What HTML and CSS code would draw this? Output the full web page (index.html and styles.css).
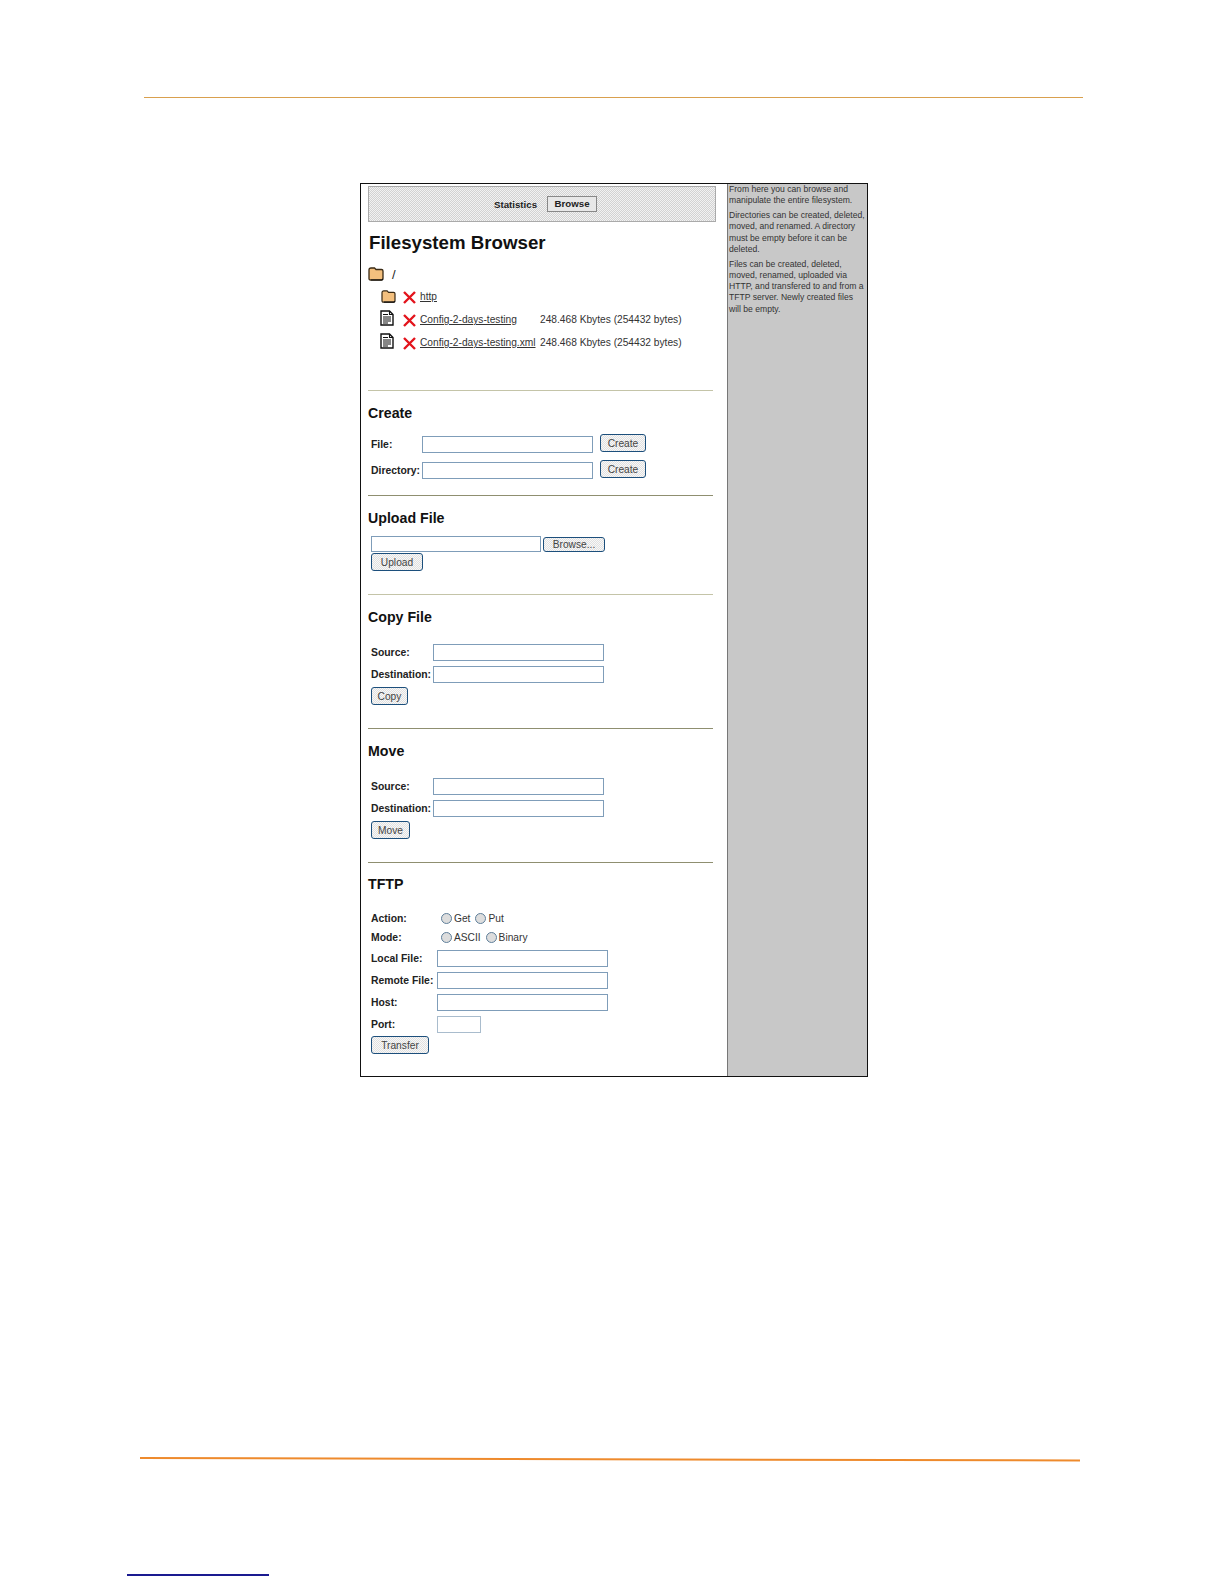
FILE: index.html
```html
<!DOCTYPE html>
<html lang="en">
<head>
    <meta charset="UTF-8">
    <title>Filesystem Browser</title>
    <link rel="stylesheet" href="styles.css">
</head>
<body>
    <svg width="0" height="0" class="defs">
        <symbol id="folder" viewBox="0 0 16 14">
            <path d="M1 3 Q1 1 3 1 H6.5 L8 2.5 H13.5 Q15 2.5 15 4 V11.5 Q15 13 13.5 13 H2.5 Q1 13 1 11.5 Z" fill="#f4c07e" stroke="#3a2a14" stroke-width="1.3"/>
            <path d="M3 13 H14 L15 12" fill="none" stroke="#111" stroke-width="1.2"/>
        </symbol>
        <symbol id="doc" viewBox="0 0 14 16">
            <path d="M1 1 H9.5 L13 4.5 V15 H1 Z" fill="#fff" stroke="#111" stroke-width="1.4"/>
            <path d="M9.5 1 V4.5 H13 M3 4.5 H8 M3 7 H11 M3 9 H11 M3 11 H11 M3 13 H8" fill="none" stroke="#111" stroke-width="1.1"/>
        </symbol>
        <symbol id="cross" viewBox="0 0 13 13">
            <path d="M1 1 L12 12 M12 1 L1 12" fill="none" stroke="#e3141c" stroke-width="2.4"/>
        </symbol>
    </svg>

    <div class="rule-top"></div>

    <div class="frame">
        <div class="main">
            <div class="tabs">
                <span>Statistics</span>
                <span class="tab-on">Browse</span>
            </div>

            <h1>Filesystem Browser</h1>

            <div class="tree-root">
                <svg class="ic-root"><use href="#folder"/></svg>
                <span>/</span>
            </div>
            <div class="tree-row row-dir">
                <svg class="ic-folder"><use href="#folder"/></svg>
                <svg class="ic-cross"><use href="#cross"/></svg>
                <a href="#">http</a>
            </div>
            <div class="tree-row">
                <svg class="ic-doc"><use href="#doc"/></svg>
                <svg class="ic-cross"><use href="#cross"/></svg>
                <a class="fname" href="#">Config-2-days-testing</a>
                <span>248.468 Kbytes (254432 bytes)</span>
            </div>
            <div class="tree-row">
                <svg class="ic-doc"><use href="#doc"/></svg>
                <svg class="ic-cross"><use href="#cross"/></svg>
                <a class="fname" href="#">Config-2-days-testing.xml</a>
                <span>248.468 Kbytes (254432 bytes)</span>
            </div>

            <section class="sec sec-create">
                <h2>Create</h2>
                <div class="create-row">
                    <label>File:</label>
                    <input class="field" type="text">
                    <button class="btn btn-create">Create</button>
                </div>
                <div class="create-row">
                    <label>Directory:</label>
                    <input class="field" type="text">
                    <button class="btn btn-create">Create</button>
                </div>
            </section>

            <section class="sec sec-upload">
                <h2>Upload File</h2>
                <div class="upload-row">
                    <input class="field field-up" type="text">
                    <button class="btn btn-browse">Browse...</button>
                </div>
                <button class="btn btn-upload">Upload</button>
            </section>

            <section class="sec sec-copy">
                <h2>Copy File</h2>
                <div class="pair-row"><label>Source:</label><input class="field" type="text"></div>
                <div class="pair-row"><label>Destination:</label><input class="field" type="text"></div>
                <button class="btn btn-copy">Copy</button>
            </section>

            <section class="sec sec-move">
                <h2>Move</h2>
                <div class="pair-row"><label>Source:</label><input class="field" type="text"></div>
                <div class="pair-row"><label>Destination:</label><input class="field" type="text"></div>
                <button class="btn btn-move">Move</button>
            </section>

            <section class="sec sec-tftp">
                <h2>TFTP</h2>
                <div class="radio-row">
                    <label>Action:</label>
                    <span class="radio"></span><span class="opt">Get</span>
                    <span class="radio"></span><span class="opt">Put</span>
                </div>
                <div class="radio-row">
                    <label>Mode:</label>
                    <span class="radio"></span><span class="opt">ASCII</span>
                    <span class="radio"></span><span class="opt">Binary</span>
                </div>
                <div class="tftp-row"><label>Local File:</label><input class="field" type="text"></div>
                <div class="tftp-row"><label>Remote File:</label><input class="field" type="text"></div>
                <div class="tftp-row"><label>Host:</label><input class="field" type="text"></div>
                <div class="tftp-row"><label>Port:</label><input class="field field-port" type="text"></div>
                <button class="btn btn-transfer">Transfer</button>
            </section>
        </div>

        <aside class="side">
            <p>From here you can browse and<br>manipulate the entire filesystem.</p>
            <p>Directories can be created, deleted,<br>moved, and renamed. A directory<br>must be empty before it can be<br>deleted.</p>
            <p>Files can be created, deleted,<br>moved, renamed, uploaded via<br>HTTP, and transfered to and from a<br>TFTP server. Newly created files<br>will be empty.</p>
        </aside>
    </div>

    <div class="rule-bottom"></div>
    <div class="foot-link"></div>
</body>
</html>
```

FILE: styles.css
```css
html, body { margin: 0; padding: 0; background: #fff; }
body { font-family: "Liberation Sans", Arial, sans-serif; color: #222; width: 1224px; height: 1584px; overflow: hidden; }
.defs { position: absolute; }

.rule-top { margin: 97px 0 0 144px; width: 939px; height: 1px; background: #d9a04e; }
.rule-bottom { margin: 380px 0 0 140px; width: 940px; height: 2px; background: #ee8a2c; transform: rotate(0.15deg); transform-origin: left center; }
.foot-link { margin: 115px 0 0 127px; width: 142px; height: 2px; background: #1a1a90; }

.frame { display: flex; margin: 85px 0 0 360px; width: 506px; height: 892px; border: 1px solid #111; }
.main { width: 366px; box-sizing: border-box; padding: 2px 0 0 7px; background: #fff; }
.side { flex: 1; background: #c8c8c8; border-left: 1px solid #777; padding: 0 0 0 1px; font-size: 8.6px; line-height: 11.2px; color: #333; white-space: nowrap; overflow: hidden; }
.side p { margin: 0 0 3.8px; }

.tabs { display: flex; justify-content: center; align-items: center; gap: 10px; width: 348px; height: 36px; box-sizing: border-box; padding-left: 7px; border: 1px solid #aaa; background: repeating-conic-gradient(#d2d2d2 0 25%, #f2f2f2 0 50%) 0 0 / 2px 2px; font-size: 9.7px; font-weight: bold; }
.tab-on { box-sizing: border-box; width: 50px; height: 16px; line-height: 14px; text-align: center; border: 1px solid #888; background: #e8e8e8; }

h1 { margin: 11px 0 0 1px; font-size: 18.7px; line-height: 20px; color: #111; }
h2 { margin: 0; font-size: 14.2px; line-height: 16px; color: #111; }

.tree-root { display: flex; align-items: center; gap: 8px; margin-top: 12px; height: 18px; font-size: 13px; }
.tree-row { display: flex; align-items: center; height: 23px; margin-left: 12px; font-size: 10.2px; color: #333; }
.tree-row a { color: #333; }
.row-dir { margin-top: 2px; }
.ic-root { width: 16px; height: 14px; }
.ic-folder { width: 15px; height: 13px; margin-left: 1px; }
.ic-doc { width: 14px; height: 16px; margin-bottom: 3px; }
.ic-cross { width: 13px; height: 13px; margin: 2px 4px 0 9px; }
.row-dir .ic-cross { margin-left: 7px; }
.fname { width: 120px; }

.sec { width: 345px; border-top: 1px solid #c4c4a8; box-sizing: border-box; padding-top: 14px; }
.sec label { font-size: 10.4px; font-weight: bold; color: #222; }
.sec-create { margin-top: 36px; height: 105px; }
.sec-upload { height: 99px; border-top-color: #8f8f70; }
.sec-copy { height: 134px; }
.sec-move { height: 134px; border-top-color: #8f8f70; }
.sec-tftp { padding-top: 13px; border-top-color: #8f8f70; }

.field { box-sizing: border-box; width: 171px; height: 17px; margin: 0; padding: 0; border: 1px solid #7f9db9; background: #fff; }
.btn { display: block; box-sizing: border-box; height: 18px; margin: 0; padding: 0; font-family: "Liberation Sans", Arial, sans-serif; font-size: 10.2px; color: #444; border: 1px solid #1c4f7c; border-radius: 3px; background: repeating-conic-gradient(#e0e0e0 0 25%, #f8f8f8 0 50%) 0 0 / 2px 2px; }

.sec-create h2 { margin-bottom: 10px; }
.create-row { display: flex; align-items: center; height: 26px; padding-left: 3px; }
.create-row label { width: 51px; }
.btn-create { width: 46px; margin-left: 7px; margin-bottom: 2px; }

.upload-row { display: flex; align-items: center; gap: 2px; margin: 10px 0 1px 3px; }
.field-up { height: 16px; width: 170px; }
.btn-browse { width: 62px; height: 15px; }
.btn-upload { width: 52px; margin-left: 3px; }

.sec-copy h2, .sec-move h2 { margin-bottom: 16px; }
.pair-row { display: flex; align-items: center; height: 22px; padding-left: 3px; }
.pair-row label { width: 62px; }
.btn-copy { width: 37px; margin: 2px 0 0 3px; }
.btn-move { width: 39px; margin: 2px 0 0 3px; }

.sec-tftp h2 { margin-bottom: 17px; }
.radio-row { display: flex; align-items: center; height: 19px; padding-left: 3px; font-size: 10.2px; }
.radio-row label { width: 70px; }
.radio { width: 9px; height: 9px; border: 1px solid #5f7f9a; border-radius: 50%; background: #ddd; margin-right: 2px; }
.opt { margin-right: 5px; color: #333; }
.tftp-row { display: flex; align-items: center; height: 22px; padding-left: 3px; }
.tftp-row label { width: 66px; }
.field-port { width: 44px; border-color: #a9bccd; }
.btn-transfer { width: 58px; margin: 1px 0 0 3px; }
```
